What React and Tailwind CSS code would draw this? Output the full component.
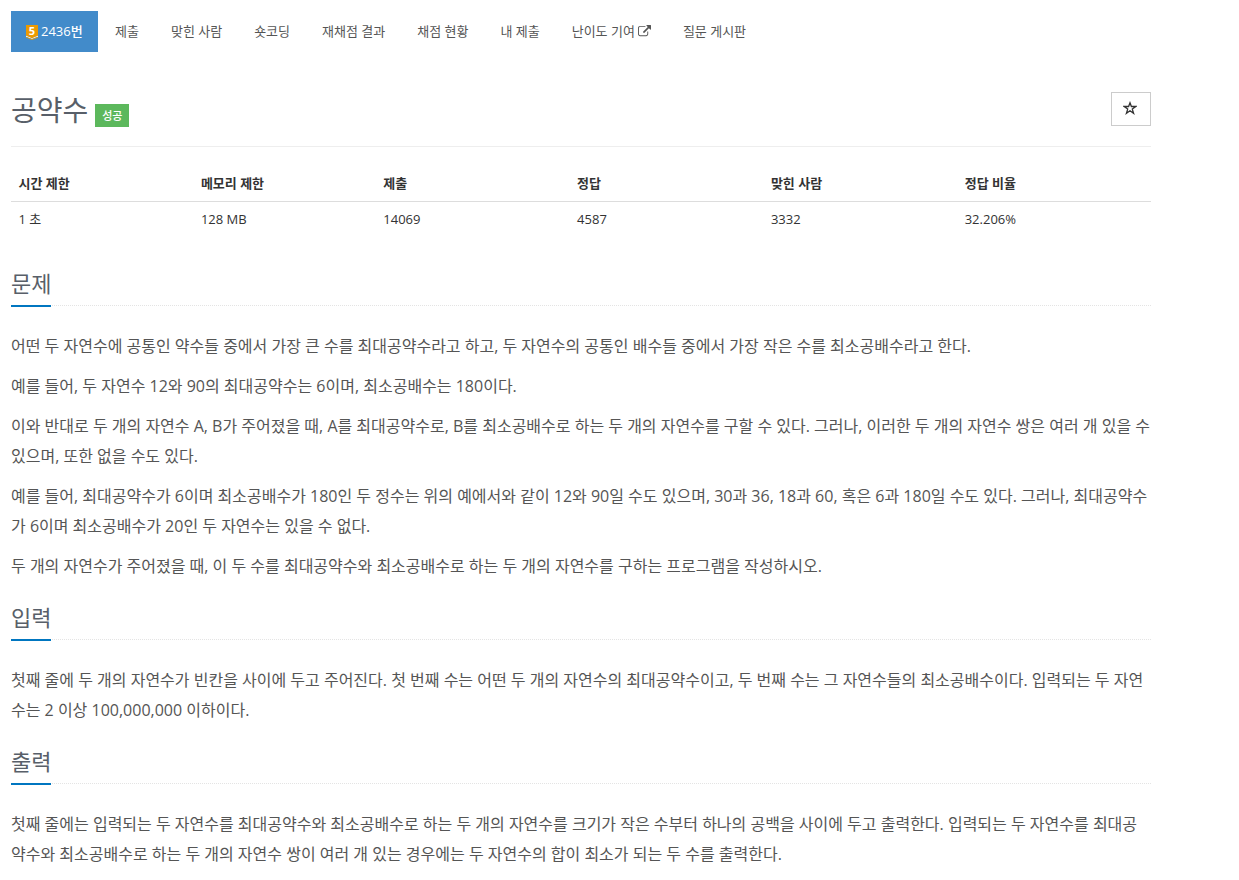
const menu = ["제출", "맞힌 사람", "숏코딩", "재채점 결과", "채점 현황", "내 제출", "난이도 기여", "질문 게시판"];

const stats = [
  { label: "시간 제한", value: "1 초", width: "w-[16%]" },
  { label: "메모리 제한", value: "128 MB", width: "w-[16%]" },
  { label: "제출", value: "14069", width: "w-[17%]" },
  { label: "정답", value: "4587", width: "w-[17%]" },
  { label: "맞힌 사람", value: "3332", width: "w-[17%]" },
  { label: "정답 비율", value: "32.206%", width: "w-[17%]" },
];

const sections = [
  {
    title: "문제",
    paragraphs: [
      ["어떤 두 자연수에 공통인 약수들 중에서 가장 큰 수를 최대공약수라고 하고, 두 자연수의 공통인 배수들 중에서 가장 작은 수를 최소공배수라고 한다."],
      ["예를 들어, 두 자연수 12와 90의 최대공약수는 6이며, 최소공배수는 180이다."],
      [
        "이와 반대로 두 개의 자연수 A, B가 주어졌을 때, A를 최대공약수로, B를 최소공배수로 하는 두 개의 자연수를 구할 수 있다. 그러나, 이러한 두 개의 자연수 쌍은 여러 개 있을 수",
        "있으며, 또한 없을 수도 있다.",
      ],
      [
        "예를 들어, 최대공약수가 6이며 최소공배수가 180인 두 정수는 위의 예에서와 같이 12와 90일 수도 있으며, 30과 36, 18과 60, 혹은 6과 180일 수도 있다. 그러나, 최대공약수",
        "가 6이며 최소공배수가 20인 두 자연수는 있을 수 없다.",
      ],
      ["두 개의 자연수가 주어졌을 때, 이 두 수를 최대공약수와 최소공배수로 하는 두 개의 자연수를 구하는 프로그램을 작성하시오."],
    ],
  },
  {
    title: "입력",
    paragraphs: [
      [
        "첫째 줄에 두 개의 자연수가 빈칸을 사이에 두고 주어진다. 첫 번째 수는 어떤 두 개의 자연수의 최대공약수이고, 두 번째 수는 그 자연수들의 최소공배수이다. 입력되는 두 자연",
        "수는 2 이상 100,000,000 이하이다.",
      ],
    ],
  },
  {
    title: "출력",
    paragraphs: [
      [
        "첫째 줄에는 입력되는 두 자연수를 최대공약수와 최소공배수로 하는 두 개의 자연수를 크기가 작은 수부터 하나의 공백을 사이에 두고 출력한다. 입력되는 두 자연수를 최대공",
        "약수와 최소공배수로 하는 두 개의 자연수 쌍이 여러 개 있는 경우에는 두 자연수의 합이 최소가 되는 두 수를 출력한다.",
      ],
    ],
  },
];

const TierBadge = () => (
  <svg viewBox="0 0 12 15" className="w-3 h-[15px] mr-[3px] mt-[2px] shrink-0 overflow-visible">
    <path d="M0 0h12v10.8L6 13.2 0 10.8z" fill="#ec9a00" />
    <path d="M0 10.8l6 2.4 6-2.4v.9l-6 2.4-6-2.4z" fill="#fff" />
    <path d="M0 11.7l6 2.4 6-2.4v.7L6 15 0 12.4z" fill="#ec9a00" />
    <text x="6" y="10" textAnchor="middle" fontSize="11" fontWeight="700" fill="#fff" fontFamily="Open Sans, sans-serif">5</text>
  </svg>
);

const ExternalLink = () => (
  <svg viewBox="0 0 1792 1792" fill="currentColor" className="w-[13px] h-[13px] ml-[3px]">
    <path d="M1408 928v320q0 119-84.5 203.5t-203.5 84.5h-832q-119 0-203.5-84.5t-84.5-203.5v-832q0-119 84.5-203.5t203.5-84.5h704q14 0 23 9t9 23v64q0 14-9 23t-23 9h-704q-66 0-113 47t-47 113v832q0 66 47 113t113 47h832q66 0 113-47t47-113v-320q0-14 9-23t23-9h64q14 0 23 9t9 23zm384-864v512q0 26-19 45t-45 19-45-19l-176-176-652 652q-10 10-23 10t-23-10l-114-114q-10-10-10-23t10-23l652-652-176-176q-19-19-19-45t19-45 45-19h512q26 0 45 19t19 45z" />
  </svg>
);

const Star = () => (
  <svg viewBox="0 0 14 14" fill="none" stroke="currentColor" strokeWidth="1.3" className="w-[14px] h-[14px]">
    <path d="M7 1.8l1.4 3.7h4.4L9.3 8.1l1.3 4.2L7 9.8l-3.6 2.5 1.3-4.2L1.2 5.5h4.4z" />
  </svg>
);

const Section = ({ title, paragraphs }) => (
  <section>
    <div className="flex items-end h-[59px] mb-[25px] border-b border-dotted border-[#e4e4e4]">
      <h2 className="text-[22px] leading-[33px] pb-[5px] -mb-[2px] border-b-2 border-[#0076c0] text-[#585f69]">{title}</h2>
    </div>
    <div className="space-y-[10px]">
      {paragraphs.map((lines) => (
        <p key={lines[0]} className="text-[16px] leading-[30px] text-[#555] whitespace-nowrap">
          {lines.map((line) => (
            <span key={line} className="block">{line}</span>
          ))}
        </p>
      ))}
    </div>
  </section>
);

const App = () => {
  return (
    <div className="w-[1151px] h-[880px] overflow-hidden pl-[11px] pt-[11px] bg-white text-[13px] text-[#333] font-['Open_Sans','Noto_Sans_CJK_KR',sans-serif]">
      <ul className="flex gap-[2px] h-[41px] leading-[21px] text-[#555]">
        <li className="flex items-center w-[87px] pl-[15px] pb-px bg-[#428bca] text-white font-medium">
          <TierBadge />
          2436번
        </li>
        {menu.map((item) => (
          <li key={item} className="flex items-center px-[15px] pb-px whitespace-nowrap">
            {item}
            {item === "난이도 기여" && <ExternalLink />}
          </li>
        ))}
      </ul>

      <div className="flex justify-between items-start h-[95px] pt-10 border-b border-[#eee]">
        <h1 className="flex text-[28px] leading-9 text-[#585f69]">
          공약수
          <span className="w-[34px] h-[23px] mt-3 ml-[7px] bg-[#5cb85c] text-white text-[11px] leading-[23px] font-medium text-center">성공</span>
        </h1>
        <button className="flex items-center justify-center w-10 h-[34px] pr-[2px] pb-[2px] border border-[#ccc] text-[#333]">
          <Star />
        </button>
      </div>

      <table className="w-full mt-[19px] table-fixed text-left">
        <thead>
          <tr className="border-b border-[#ddd]">
            {stats.map((s) => (
              <th key={s.label} className={`${s.width} h-[35px] px-[7.5px] font-bold`}>{s.label}</th>
            ))}
          </tr>
        </thead>
        <tbody>
          <tr>
            {stats.map((s) => (
              <td key={s.label} className="h-[36px] px-[7.5px]">{s.value}</td>
            ))}
          </tr>
        </tbody>
      </table>

      <div className="mt-[10px]">
        {sections.map((s) => (
          <Section key={s.title} {...s} />
        ))}
      </div>
    </div>
  );
};

export default App;
